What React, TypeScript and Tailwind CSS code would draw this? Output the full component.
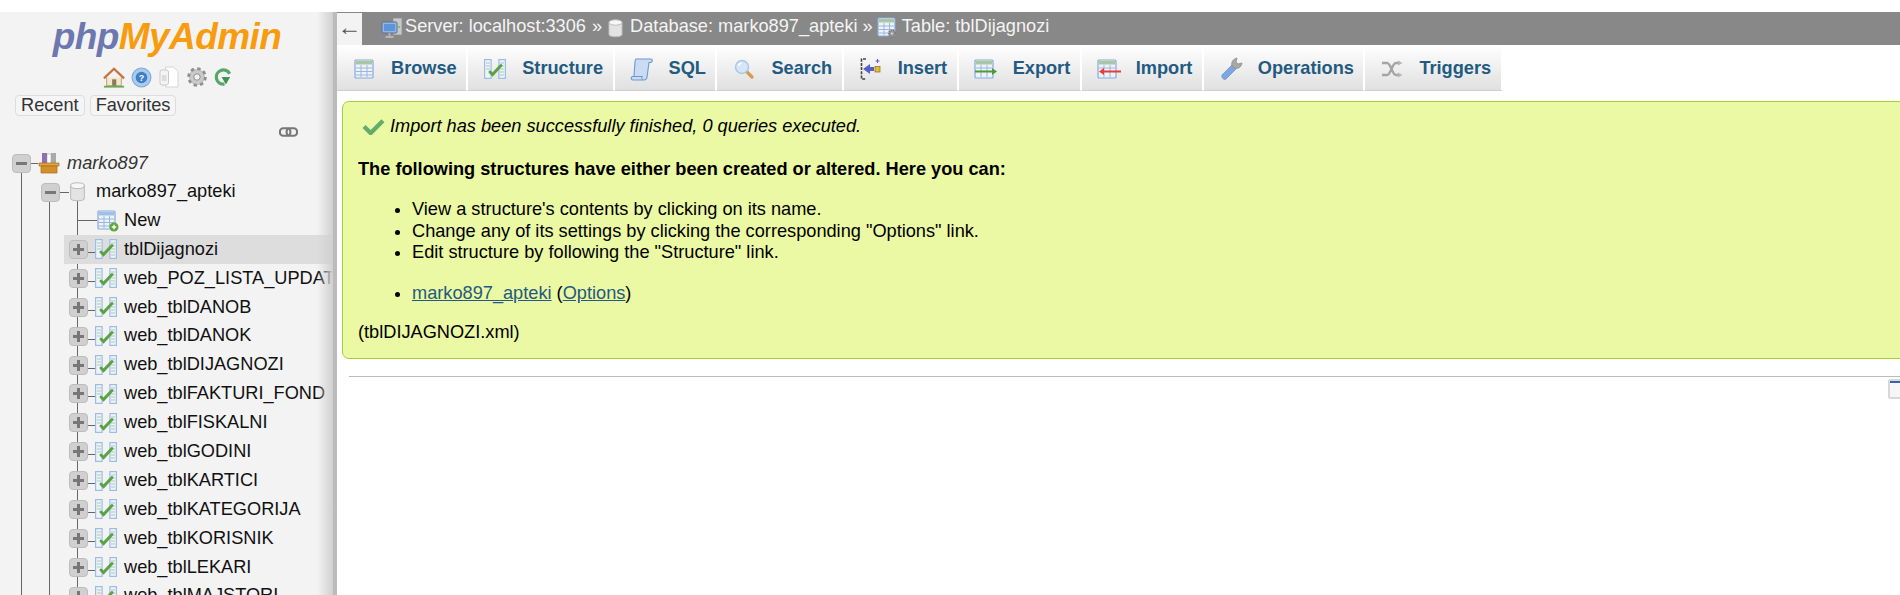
import type { ReactNode } from "react";

const FONT = "font-['Liberation_Sans',Arial,sans-serif]";

function TableGrid({ className }: { className?: string }) {
  return (
    <svg viewBox="0 0 20 20" className={className}>
      <rect x="1" y="1" width="18" height="18" rx="1" fill="#eef3fa" stroke="#86a9d8" strokeWidth="1.2" />
      <rect x="2" y="2" width="16" height="3.5" fill="#a9c8a0" />
      <path d="M2 9h16M2 12.5h16M2 16h16M7 6v12M13 6v12" stroke="#9ab6dc" strokeWidth="1" />
    </svg>
  );
}

function NewTableIcon() {
  return (
    <svg viewBox="0 0 22 22" className="w-[22px] h-[22px] shrink-0">
      <rect x="1" y="1" width="17" height="18" rx="1" fill="#eef3fa" stroke="#86a9d8" strokeWidth="1.2" />
      <rect x="2" y="2" width="15" height="3.5" fill="#9ebfe6" />
      <path d="M2 9h15M2 12.5h15M2 16h15M7 6v12M12.5 6v12" stroke="#9ab6dc" strokeWidth="1" />
      <circle cx="17" cy="17" r="4.5" fill="#5fa83c" />
      <path d="M14.8 17h4.4M17 14.8v4.4" stroke="#fff" strokeWidth="1.4" />
    </svg>
  );
}

function StructureIcon({ className = "w-[22px] h-[20px] shrink-0" }: { className?: string }) {
  return (
    <svg viewBox="0 0 22 20" className={className}>
      <rect x="0.6" y="0.6" width="6.5" height="18.8" fill="#eef3fa" stroke="#9dbce4" strokeWidth="1.2" />
      <rect x="14.9" y="0.6" width="6.5" height="18.8" fill="#eef3fa" stroke="#9dbce4" strokeWidth="1.2" />
      <path d="M2 4h4M2 7h4M2 10h4M16 4h4M16 7h4M16 10h4M16 13h4M16 16h4" stroke="#a9cdb0" strokeWidth="1" />
      <path d="M6 13l2.500 2.500L17 6.500" fill="none" stroke="#5aa344" strokeWidth="3" strokeLinecap="round" />
    </svg>
  );
}

function SqlIcon() {
  return (
    <svg viewBox="0 0 24 24" className="w-[24px] h-[24px]">
      <path d="M6 2h15c1.5 0 2 2 0 3.5h-2L17 20c-.3 2-1.5 3-3 3H3c-2 0-2.5-2.5-.7-3.5H4L5 5c.2-2 .5-3 1-3z" fill="#c9dcf3" stroke="#6f97cf" strokeWidth="1.1" />
      <path d="M2.5 19.5h10c-1 1-.8 2.5 0 3.3" fill="none" stroke="#6f97cf" strokeWidth="1" />
    </svg>
  );
}

function SearchIcon() {
  return (
    <svg viewBox="0 0 20 20" className="w-[20px] h-[20px]">
      <path d="M12 12l6 6" stroke="#d69a55" strokeWidth="3.2" strokeLinecap="round" />
      <circle cx="8" cy="8" r="6.5" fill="#d3e7f8" stroke="#a9c6e2" strokeWidth="1.4" />
      <path d="M4.5 7a4 4 0 0 1 3-3" stroke="#fff" strokeWidth="1.4" fill="none" />
    </svg>
  );
}

function InsertIcon() {
  return (
    <svg viewBox="0 0 22 22" className="w-[22px] h-[22px]">
      <path d="M6 1H1.5v20H6" fill="none" stroke="#444" strokeWidth="1.6" strokeDasharray="3 1.2" />
      <path d="M3 11l7-5v3h4v4h-4v3z" fill="#5460c8" />
      <rect x="15" y="8.5" width="5" height="5.5" fill="#e8b93c" stroke="#8a6a14" strokeWidth="0.7" />
      <path d="M17.5 1v4M15.5 3h4" stroke="#5460c8" strokeWidth="1.1" />
    </svg>
  );
}

function ExportIcon() {
  return (
    <svg viewBox="0 0 24 20" className="w-[24px] h-[20px]">
      <rect x="1" y="1" width="18" height="18" rx="1" fill="#eef3fa" stroke="#86a9d8" strokeWidth="1.2" />
      <rect x="2" y="2" width="16" height="3.5" fill="#a9c8a0" />
      <path d="M2 9h16M7 6v12M13 6v12" stroke="#9ab6dc" strokeWidth="1" />
      <path d="M1 11.5h17V9l5 3.5-5 3.5v-2.500H1z" fill="#4e9a38" />
    </svg>
  );
}

function ImportIcon() {
  return (
    <svg viewBox="0 0 24 20" className="w-[24px] h-[20px]">
      <rect x="1" y="1" width="18" height="18" rx="1" fill="#eef3fa" stroke="#86a9d8" strokeWidth="1.2" />
      <rect x="2" y="2" width="16" height="3.5" fill="#a9c8a0" />
      <path d="M2 9h16M7 6v12M13 6v12" stroke="#9ab6dc" strokeWidth="1" />
      <path d="M24 11.500H7V9l-5 3.500 5 3.500v-2.500h17z" fill="#ea3b3b" />
    </svg>
  );
}

function WrenchIcon() {
  return (
    <svg viewBox="0 0 24 24" className="w-[24px] h-[24px]">
      <path d="M3 18L13 8l4 4-10 10c-2 1.500-5-1.500-4-4z" fill="#7fa6e0" stroke="#6a90cc" strokeWidth="0.8" />
      <path d="M13 9c-1-4 1-7 5-8l-1 4 2 2 4-1c-.5 4-4 6.500-8 5z" fill="#a8a8a8" stroke="#8c8c8c" strokeWidth="0.8" />
    </svg>
  );
}

function TriggerIcon() {
  return (
    <svg viewBox="0 0 22 18" className="w-[22px] h-[18px]">
      <path d="M1 3h5c4 0 5 12 9 12h3M1 15h5c4 0 5-12 9-12h3" fill="none" stroke="#a5a5a5" strokeWidth="2.400" />
      <path d="M17 0.500l4.500 2.500-4.500 2.500zM17 12.500l4.500 2.500-4.500 2.500z" fill="#b5b5b5" />
    </svg>
  );
}

function DbIcon({ className = "w-[15px] h-[19px]" }: { className?: string }) {
  return (
    <svg viewBox="0 0 15 19" className={`${className} shrink-0`}>
      <path d="M1 3.500v12c0 3 13 3 13 0v-12z" fill="#e3e3e3" stroke="#bdbdbd" />
      <ellipse cx="7.500" cy="3.500" rx="6.500" ry="2.700" fill="#f7f7f7" stroke="#bdbdbd" />
    </svg>
  );
}

function ServerIcon() {
  return (
    <svg viewBox="0 0 22 22" className="w-[22px] h-[22px]">
      <rect x="12" y="1" width="9" height="17" fill="#c9c9c9" stroke="#8f8f8f" strokeWidth="0.8" />
      <circle cx="18" cy="10" r="1" fill="#5fc04a" />
      <rect x="1" y="5" width="15" height="11" rx="1" fill="#8fb6e6" stroke="#5f6f88" />
      <rect x="3" y="7" width="11" height="7" fill="#5d93d8" />
      <path d="M8.500 16v3M4.500 20h8" stroke="#b5b5b5" strokeWidth="1.800" />
    </svg>
  );
}

function TableGearIcon() {
  return (
    <svg viewBox="0 0 20 22" className="w-[20px] h-[22px]">
      <rect x="1" y="1" width="17" height="18" rx="1" fill="#eef3fa" stroke="#86a9d8" strokeWidth="1.2" />
      <rect x="2" y="2" width="15" height="3.500" fill="#a9c8a0" />
      <path d="M2 9h15M2 12.500h15M2 16h15M7 6v12M12.500 6v12" stroke="#9ab6dc" strokeWidth="1" />
      <circle cx="15" cy="16.500" r="3.300" fill="#9a9a9a" stroke="#7c7c7c" strokeDasharray="1.500 0.800" strokeWidth="1.600" />
      <circle cx="15" cy="16.500" r="1" fill="#ddd" />
    </svg>
  );
}

function QuickIcons() {
  return (
    <div className="flex items-center gap-[6px] h-[24px] pl-[103px]">
      <svg viewBox="0 0 24 22" className="w-[22px] h-[21px]">
        <path d="M4 11v9h16v-9" fill="#f2e6cf" stroke="#b89b6a" />
        <rect x="10" y="13" width="4.500" height="7" fill="#8a7a5a" />
        <path d="M1 12L12 1.500 23 12" fill="none" stroke="#c4743c" strokeWidth="2.500" />
        <path d="M1 21h22" stroke="#6aa84f" strokeWidth="2" />
      </svg>
      <svg viewBox="0 0 20 20" className="w-[21px] h-[21px]">
        <circle cx="10" cy="10" r="9" fill="#a9cbee" stroke="#7ea9da" />
        <circle cx="10" cy="10" r="5.500" fill="#3f7fc8" />
        <text x="10" y="13" textAnchor="middle" fontSize="8.500" fontWeight="700" fill="#fff" fontFamily="Liberation Sans">?</text>
      </svg>
      <svg viewBox="0 0 20 22" className="w-[22px] h-[22px]">
        <path d="M6.500 1h8l4.500 4.500V21H6.500z" fill="#fff" stroke="#d5d5d5" />
        <rect x="1" y="4" width="8.500" height="15" rx="2" fill="#f4f4f4" stroke="#c9c9c9" />
        <rect x="3" y="9" width="4.500" height="6" fill="#dcdcdc" />
      </svg>
      <svg viewBox="0 0 22 22" className="w-[22px] h-[22px]">
        <circle cx="11" cy="11" r="8" fill="#bdbdbd" stroke="#8f8f8f" strokeWidth="3.500" strokeDasharray="3.200 3.080" />
        <circle cx="11" cy="11" r="7" fill="#c9c9c9" />
        <circle cx="11" cy="11" r="3.200" fill="#f3f3f3" stroke="#8f8f8f" />
      </svg>
      <svg viewBox="0 0 20 20" className="w-[19px] h-[20px]">
        <path d="M16.500 6.500A7.500 7.500 0 1 0 11 17.500" fill="none" stroke="#55a868" strokeWidth="3.500" />
        <path d="M8 10h9l-4.500 8z" fill="#3f9455" />
      </svg>
    </div>
  );
}

function ToggleBox({ sign }: { sign: "+" | "-" }) {
  return (
    <div className="relative z-10 w-[19px] h-[19px] shrink-0 rounded-[4px] bg-[#d0d0d0] border border-[#bdbdbd] flex items-center justify-center">
      <div className="relative w-[11px] h-[3px] bg-[#777]">
        {sign === "+" && <div className="absolute left-[4px] top-[-4px] w-[3px] h-[11px] bg-[#777]" />}
      </div>
    </div>
  );
}

const tables = [
  "tblDijagnozi",
  "web_POZ_LISTA_UPDATE",
  "web_tblDANOB",
  "web_tblDANOK",
  "web_tblDIJAGNOZI",
  "web_tblFAKTURI_FOND",
  "web_tblFISKALNI",
  "web_tblGODINI",
  "web_tblKARTICI",
  "web_tblKATEGORIJA",
  "web_tblKORISNIK",
  "web_tblLEKARI",
  "web_tblMAJSTORI",
];

function Sidebar() {
  return (
    <aside className="relative w-[337px] h-[583px] shrink-0 overflow-hidden bg-[#f3f3f3] border-r-[4px] border-[#bbbbbb]">
      <div className="relative">
        <div className="h-[53px] pt-[3px] text-center text-[37px] leading-[44px] font-bold italic tracking-[-0.6px] pl-[1px]">
          <span className="text-[#6c78af]">php</span>
          <span className="text-[#f89c0e]">MyAdmin</span>
        </div>
        <QuickIcons />
        <div className="flex gap-[5px] pl-[15px] pt-[6px]">
          {["Recent", "Favorites"].map((t) => (
            <div key={t} className="h-[21px] px-[5px] leading-[19px] text-[18.200px] text-[#333] bg-[#f5f5f5] border border-[#dddddd] rounded-[4px]">
              {t}
            </div>
          ))}
        </div>
        <div className="flex justify-end pr-[35px] pt-[11px] h-[24px]">
          <svg viewBox="0 0 20 10" className="w-[19px] h-[10px]">
            <rect x="1" y="1" width="11" height="8" rx="3.500" fill="none" stroke="#777" strokeWidth="2.200" />
            <rect x="8" y="1" width="11" height="8" rx="3.500" fill="none" stroke="#777" strokeWidth="2.200" />
          </svg>
        </div>

        <div className="relative pt-[9px]">
          {/* tree guide lines */}
          <div className="absolute left-[21px] top-[23px] bottom-0 w-px bg-[#666]" />
          <div className="absolute left-[49px] top-[52px] bottom-0 w-px bg-[#666]" />
          <div className="absolute left-[77px] top-[52px] bottom-0 w-px bg-[#666]" />

          <div className="relative flex items-center h-[28.500px] pl-[12px]">
            <ToggleBox sign="-" />
            <div className="w-[7px] h-px bg-[#666] shrink-0" />
            <svg viewBox="0 0 22 24" className="w-[22px] h-[24px] shrink-0">
              <rect x="4" y="2" width="5" height="11" fill="#8f6fb5" />
              <rect x="9" y="3" width="4" height="10" fill="#fff" stroke="#999" strokeWidth="0.5" />
              <rect x="13" y="2" width="5" height="11" fill="#a9a9a9" />
              <path d="M1 12h20v3H1z" fill="#e2a63c" stroke="#a06e18" strokeWidth="0.7" />
              <path d="M3 15h16v7H3z" fill="#d48f2a" stroke="#a06e18" strokeWidth="0.7" />
            </svg>
            <span className="ml-[7px] text-[18.200px] italic text-[#333]">marko897</span>
          </div>

          <div className="relative flex items-center h-[29px] pl-[41px]">
            <ToggleBox sign="-" />
            <div className="w-[9px] h-px bg-[#666] shrink-0" />
            <DbIcon className="w-[17px] h-[20px]" />
            <span className="ml-[10px] text-[18.200px] text-[#111]">marko897_apteki</span>
          </div>

          <div className="relative flex items-center h-[28.500px] pl-[77px]">
            <div className="w-[20px] h-px bg-[#666] shrink-0" />
            <NewTableIcon />
            <span className="ml-[5px] text-[18.200px] text-[#111]">New</span>
          </div>

          {tables.map((t, i) => (
            <div key={t} className={`relative flex items-center h-[28.900px] ml-[64px] pl-[5px] whitespace-nowrap ${i === 0 ? "bg-[#dddddd]" : ""}`}>
              <ToggleBox sign="+" />
              <div className="w-[7px] h-px bg-[#666] mt-[6px] shrink-0" />
              <StructureIcon />
              <span className="ml-[7px] text-[18.200px] text-[#111] shrink-0">{t}</span>
            </div>
          ))}
        </div>
      </div>
      <div className="absolute right-0 top-0 bottom-0 w-[16px] bg-gradient-to-r from-transparent to-[#d0d0d0]" />
    </aside>
  );
}

function Crumb({ icon, children, gap = "ml-[3px]" }: { icon: ReactNode; children: ReactNode; gap?: string }) {
  return (
    <span className="flex items-center">
      {icon}
      <span className={`${gap} mb-[4px] whitespace-nowrap`}>{children}</span>
    </span>
  );
}

const tabs = [
  { label: "Browse", icon: <TableGrid className="w-[20px] h-[20px]" /> },
  { label: "Structure", icon: <StructureIcon /> },
  { label: "SQL", icon: <SqlIcon /> },
  { label: "Search", icon: <SearchIcon /> },
  { label: "Insert", icon: <InsertIcon /> },
  { label: "Export", icon: <ExportIcon /> },
  { label: "Import", icon: <ImportIcon /> },
  { label: "Operations", icon: <WrenchIcon /> },
  { label: "Triggers", icon: <TriggerIcon /> },
];

export default function App() {
  return (
    <div className={`${FONT} w-[1900px] h-[595px] overflow-hidden bg-white pt-[12px] flex`}>
      <Sidebar />
      <main className="flex-1 min-w-0 overflow-hidden">
        <div className="flex items-center h-[33px] bg-[#888888] text-[18.200px] text-[#f4f4f4]">
          <div className="w-[25px] h-[32px] bg-[#f3f3f3] text-[#555] text-[24px] leading-[28px] text-center font-['Liberation_Serif',serif]">←</div>
          <div className="flex items-center ml-[19px]">
            <Crumb icon={<ServerIcon />} gap="ml-[2px]">Server: localhost:3306</Crumb>
            <span className="ml-[6px] mr-[6px] mb-[4px]">»</span>
            <Crumb icon={<DbIcon />} gap="ml-[7px]">Database: marko897_apteki</Crumb>
            <span className="ml-[5px] mr-[4px] mb-[4px]">»</span>
            <Crumb icon={<TableGearIcon />} gap="ml-[5px]">Table: tblDijagnozi</Crumb>
          </div>
        </div>

        <div className="flex h-[47px] bg-white">
          {tabs.map((t) => (
            <div key={t.label} className="flex items-center h-[46px] pr-[9.500px] pt-[2px] bg-gradient-to-b from-white to-[#e0e0e0] border-r-[2px] border-b border-r-white border-b-[#cfcfcf]">
              <span className="w-[54px] flex justify-center">{t.icon}</span>
              <span className="text-[18.200px] font-bold text-[#235a81]">{t.label}</span>
            </div>
          ))}
        </div>

        <div className="mt-[9px] ml-[5px] -mr-[20px] h-[258px] rounded-[7px] border border-[#a6ce39] bg-[#ebf8a4] pl-[15px] pt-[14px] text-[18.200px] text-black">
          <div className="flex items-center h-[21px] italic">
            <svg viewBox="0 0 24 18" className="w-[23px] h-[17px] ml-[4px] mr-[5px]">
              <path d="M2 9l7 7L22 3" fill="none" stroke="#62ad6a" strokeWidth="4.500" />
            </svg>
            Import has been successfully finished, 0 queries executed.
          </div>
          <p className="mt-[22px] font-bold leading-[21px]">The following structures have either been created or altered. Here you can:</p>
          <ul className="mt-[19px] ml-[54px] list-disc leading-[21.500px]">
            <li>View a structure's contents by clicking on its name.</li>
            <li>Change any of its settings by clicking the corresponding "Options" link.</li>
            <li>Edit structure by following the "Structure" link.</li>
          </ul>
          <ul className="mt-[19px] ml-[54px] list-disc leading-[21.500px]">
            <li>
              <a className="underline text-[#235a81]">marko897_apteki</a> (<a className="underline text-[#235a81]">Options</a>)
            </li>
          </ul>
          <p className="mt-[18px] leading-[21px]">(tblDIJAGNOZI.xml)</p>
        </div>

        <div className="mt-[17px] ml-[12px] h-px bg-[#bbbbbb]" />
        <div className="flex justify-end -mr-[6px] mt-[2px]">
          <div className="w-[18px] h-[20px] rounded-[2px] border-2 border-[#d8d8d8] bg-[#f6f6f6]">
            <div className="h-[2px] bg-[#3a63ad]" />
          </div>
        </div>
      </main>
    </div>
  );
}
